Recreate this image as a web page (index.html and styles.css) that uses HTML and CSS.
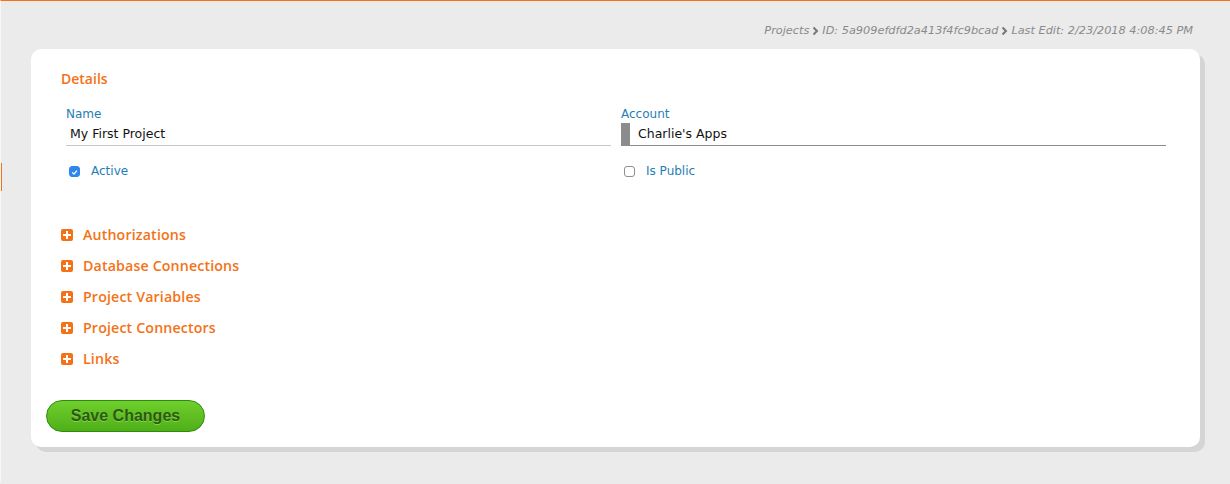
FILE: index.html
```html
<!DOCTYPE html>
<html>
<head>
<meta charset="utf-8">
<link rel="stylesheet" href="styles.css">
</head>
<body>
<div class="edge-mark"></div>
<div class="crumbs">
  <span>Projects</span><svg class="chev" viewBox="0 0 7 10" width="7" height="10"><path d="M1.5 1.5 L5 5 L1.5 8.5" fill="none" stroke="#777" stroke-width="2"/></svg><span>ID: 5a909efdfd2a413f4fc9bcad</span><svg class="chev" viewBox="0 0 7 10" width="7" height="10"><path d="M1.5 1.5 L5 5 L1.5 8.5" fill="none" stroke="#777" stroke-width="2"/></svg><span>Last Edit: 2/23/2018 4:08:45 PM</span>
</div>
<div class="card">
  <h2 class="heading">Details</h2>
  <div class="fields">
    <div class="field">
      <label class="label">Name</label>
      <div class="input">My First Project</div>
    </div>
    <div class="field">
      <label class="label">Account</label>
      <div class="input select"><span class="bar"></span>Charlie's Apps</div>
    </div>
    <div class="check">
      <span class="box on"><svg viewBox="0 0 12 12" width="12" height="12"><path d="M3.3 6.2 L5.2 8.1 L8.8 4" fill="none" stroke="#fff" stroke-width="1.6" stroke-linecap="round" stroke-linejoin="round"/></svg></span>
      <span class="check-label">Active</span>
    </div>
    <div class="check">
      <span class="box"></span>
      <span class="check-label">Is Public</span>
    </div>
  </div>
  <ul class="sections">
    <li><span class="plus"></span>Authorizations</li>
    <li><span class="plus"></span>Database Connections</li>
    <li><span class="plus"></span>Project Variables</li>
    <li><span class="plus"></span>Project Connectors</li>
    <li><span class="plus"></span>Links</li>
  </ul>
  <button class="save">Save Changes</button>
</div>
</body>
</html>
```
FILE: styles.css
```css
html, body { margin: 0; padding: 0; }
body {
  background: #ebebeb;
  border-top: 1px solid #f47216;
  border-left: 1px solid #f6f6f6;
  height: 483px;
  box-sizing: border-box;
  font-family: "DejaVu Sans", sans-serif;
  position: relative;
}
.edge-mark {
  position: absolute;
  left: -1px; top: 162px;
  width: 2px; height: 28px;
  background: #f47216;
}
.crumbs {
  display: flex;
  justify-content: flex-end;
  align-items: center;
  gap: 3px;
  padding: 21px 37px 0 0;
  height: 17px;
  font-size: 11.3px;
  font-style: italic;
  color: #8a8a8a;
}
.chev { display: block; }
.card {
  margin: 10px 0 0 30px;
  width: 1169px;
  height: 398px;
  box-sizing: border-box;
  background: #fff;
  border-radius: 10px;
  box-shadow: 5px 5px 0 #d5d5d5;
  padding: 21px 34px 0 30px;
}
.heading {
  margin: 0;
  font-family: "Open Sans", sans-serif;
  font-size: 14px;
  font-weight: 600;
  color: #f47216;
  line-height: 18px;
}
.fields {
  display: grid;
  grid-template-columns: 545px 545px;
  column-gap: 10px;
  margin: 18px 0 0 5px;
}
.label {
  display: block;
  font-size: 12px;
  color: #1f7eb4;
  line-height: 16px;
}
.input {
  font-size: 12.5px;
  color: #111;
  line-height: 22px;
  padding-left: 4px;
  border-bottom: 1px solid #c8c8c8;
  height: 23px;
  box-sizing: border-box;
  margin-top: 1px;
}
.input.select {
  display: flex;
  align-items: center;
  padding-left: 0;
  border-bottom: 1px solid #8c8c8c;
}
.bar {
  width: 9px; height: 22px;
  background: #8c8c8c;
  margin-right: 8px;
}
.check {
  display: flex;
  align-items: center;
  margin-top: 18px;
  padding-left: 3px;
  height: 14px;
}
.box {
  width: 11px; height: 11px;
  border: 1px solid #8f8f8f;
  border-radius: 3px;
  background: #fff;
  box-sizing: border-box;
  display: flex;
}
.box.on { background: #2f86ec; border-color: #2f86ec; }
.box svg { width: 11px; height: 11px; }
.check-label {
  font-size: 12px;
  color: #1f7eb4;
  margin-left: 11px;
}
.sections {
  list-style: none;
  margin: 41px 0 0 0;
  padding: 0;
}
.sections li {
  display: flex;
  align-items: center;
  height: 31px;
  font-family: "Open Sans", sans-serif;
  font-size: 14.2px;
  font-weight: 600;
  letter-spacing: 0.15px;
  color: #f47216;
}
.plus {
  width: 12px; height: 12px;
  border-radius: 2px;
  background: #f47216;
  margin-right: 10px;
  position: relative;
}
.plus::before, .plus::after {
  content: "";
  position: absolute;
  background: #fff;
}
.plus::before { left: 2px; top: 5px; width: 8px; height: 2px; }
.plus::after { left: 5px; top: 2px; width: 2px; height: 8px; }
.save {
  margin: 26px 0 0 -15px;
  width: 159px;
  height: 32px;
  border-radius: 16px;
  border: 1px solid #2f8a10;
  background: linear-gradient(#6fcf2c, #4faf18);
  color: #2d5a10;
  font-family: "Liberation Sans", Arial, sans-serif;
  font-weight: bold;
  font-size: 16px;
  text-shadow: 0 1px 0 rgba(160,230,120,0.6);
  padding: 0;
}
```
